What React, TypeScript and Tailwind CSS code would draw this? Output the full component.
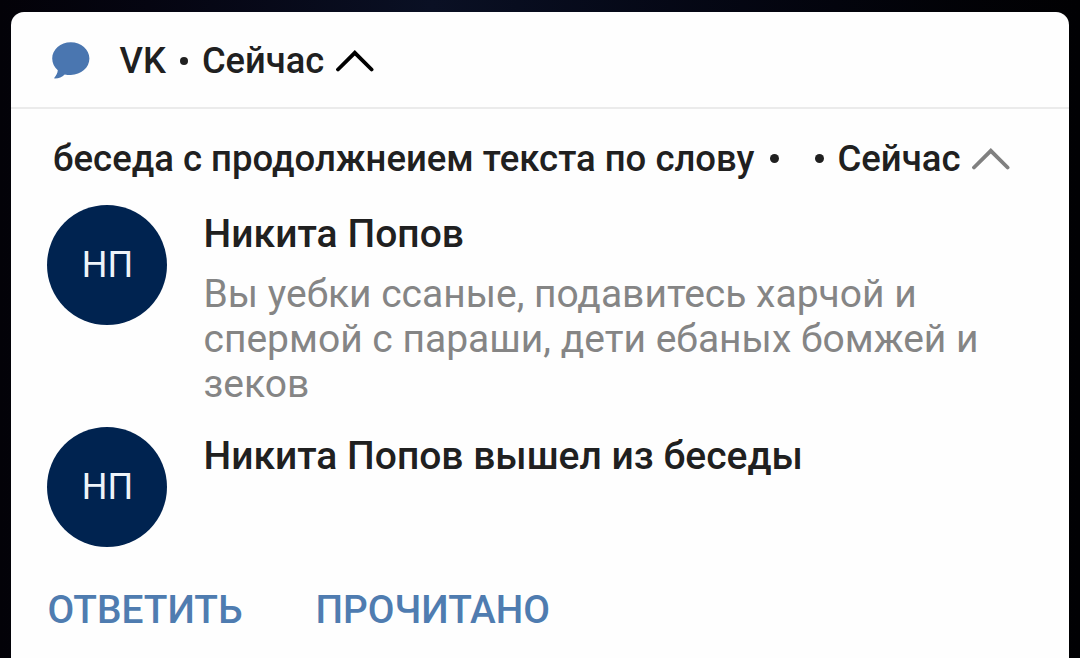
import React from "react";

function Chevron({ className }: { className: string }) {
  return (
    <svg viewBox="0 0 38 22" className={className} fill="none" stroke="currentColor" strokeLinecap="round" strokeLinejoin="miter">
      <path d="M2 19.5 18.8 2.8 35.6 19.5" />
    </svg>
  );
}

function Dot() {
  return <span className="size-[8.5px] shrink-0 rounded-full bg-[#202020]" />;
}

function Avatar() {
  return (
    <div className="flex size-[120px] shrink-0 items-center justify-center rounded-full bg-[#002350] pl-px text-[36px] leading-none text-[#eef4fa]">
      НП
    </div>
  );
}

export default function App() {
  return (
    <div className="h-[658px] w-[1080px] overflow-hidden bg-[#03030b] bg-linear-to-r from-[#030208] via-[#0a1024] via-40% to-[#010103] pt-3 pr-[11px] pl-[11px] font-['Roboto',sans-serif]">
      <main className="h-full rounded-t-[13px] bg-[#fefefe] text-[#202020]">
        <header className="flex h-[97px] items-center border-b-2 border-[#ebebeb] pt-[3px] pl-[41px] text-[36.3px] leading-[44px] font-medium">
          <svg viewBox="0 0 38 37" className="mb-0.5 h-[37px] w-[38px] shrink-0" fill="#4a76b0">
            <path d="M18.800.2C8.500.2.2 7.500.2 16.600c0 4.600 2.100 8.700 5.600 11.700C5.600 31 4.400 33.300 2.500 35.500c-.5.600-.2 1.200.6 1.100 3.800-.4 6.900-1.700 9.600-4.200 1.900.4 4 .6 6.100.6 10.300 0 18.600-7.300 18.600-16.400S29.100.2 18.800.2Z" />
          </svg>
          <span className="ml-[29.500px] ml-[29.5px]">VK</span>
          <span className="ml-[14px] flex"><Dot /></span>
          <span className="ml-[13.5px]">Сейчас</span>
          <Chevron className="ml-3 h-[22px] w-[38px] stroke-[3.8] text-black" />
        </header>

        <div className="flex h-24 items-center pt-[3px] pl-[42px] text-[36.5px] leading-[44px] font-medium">
          <h2 className="whitespace-nowrap">беседа с продолжнеием текста по слову</h2>
          <span className="ml-[16px] flex"><Dot /></span>
          <span className="ml-[36.5px] flex"><Dot /></span>
          <span className="ml-[13.5px]">Сейчас</span>
          <Chevron className="ml-3 h-[22px] w-[38px] stroke-[3.8] text-[#808080]" />
        </div>

        <section className="flex h-[222px] pl-9">
          <Avatar />
          <div className="ml-[36.5px] pt-[6px]">
            <h3 className="text-[39px] leading-[46px] font-medium tracking-[0.05px] whitespace-nowrap">Никита Попов</h3>
            <p className="mt-[15px] text-[39px] leading-[45px] text-[#858585]">
              <span className="block whitespace-nowrap">Вы уебки ссаные, подавитесь харчой и</span>
              <span className="block whitespace-nowrap">спермой с параши, дети ебаных бомжей и</span>
              <span className="block whitespace-nowrap">зеков</span>
            </p>
          </div>
        </section>

        <section className="flex h-[120px] pl-9">
          <Avatar />
          <div className="ml-[36.5px] pt-[6px]">
            <h3 className="text-[39px] leading-[46px] font-medium whitespace-nowrap">Никита Попов вышел из беседы</h3>
          </div>
        </section>

        <footer className="flex pt-[41px] pl-[36.5px] text-[38.8px] leading-[44px] font-medium text-[#4f7cb0]">
          <button className="w-[268px] text-left">ОТВЕТИТЬ</button>
          <button className="text-left">ПРОЧИТАНО</button>
        </footer>
      </main>
    </div>
  );
}
